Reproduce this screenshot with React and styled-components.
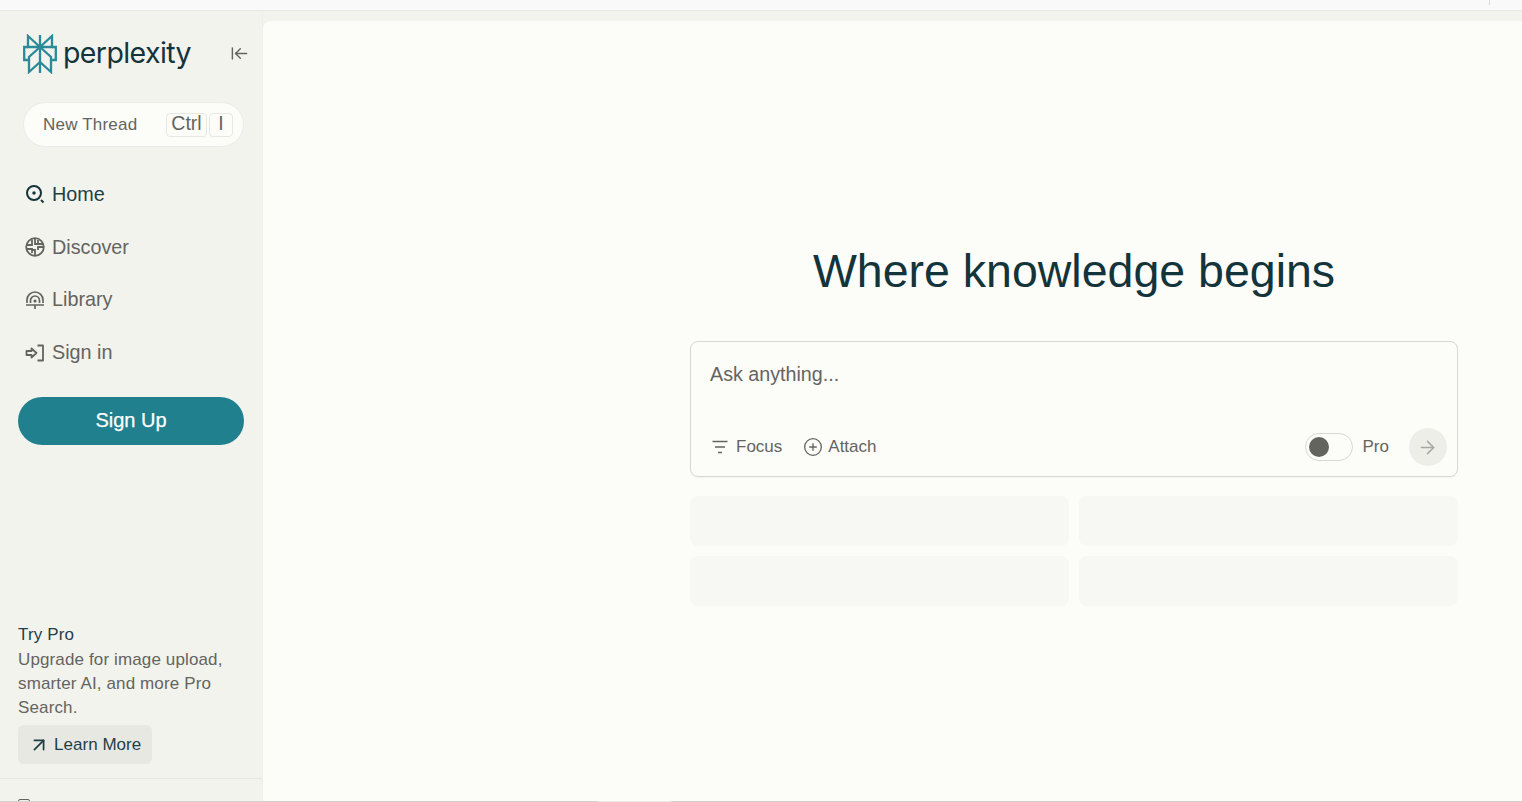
import React from "react";
import styled, { createGlobalStyle } from "styled-components";
import { ArrowLeftToLine, ArrowRight, ArrowUpRight, CirclePlus } from "lucide-react";

const GlobalStyle = createGlobalStyle`
  html, body {
    margin: 0;
    height: 100%;
    overflow: hidden;
    background: #f3f3ee;
    font-family: "Liberation Sans", Arial, sans-serif;
  }
  * { box-sizing: border-box; }
`;

const navItems = [
  { label: "Home", icon: <HomeIcon />, active: true },
  { label: "Discover", icon: <DiscoverIcon /> },
  { label: "Library", icon: <LibraryIcon /> },
  { label: "Sign in", icon: <SignInIcon /> },
];

function LogoMark() {
  return (
    <svg width="34" height="40" viewBox="0 0 34 40" fill="none" stroke="#2b8a98" strokeWidth="2.3">
      <path d="M17 1v38" />
      <path d="M5 2l12 11L29 2v11H5z" />
      <path d="M5 13H1.2v13H6M29 13h3.8v13H28" />
      <path d="M17 13L6 23v15l11-10 11 10V23z" />
    </svg>
  );
}

function HomeIcon() {
  return (
    <svg width="20" height="20" viewBox="0 0 20 20" fill="none" stroke="#13343b" strokeWidth="2">
      <circle cx="9" cy="9" r="7" />
      <circle cx="9" cy="9" r="1.7" fill="#13343b" stroke="none" />
      <path d="M16 16l2.5 2.5" />
    </svg>
  );
}

function DiscoverIcon() {
  return (
    <svg width="20" height="20" viewBox="0 0 20 20" fill="none" stroke="#64645f" strokeWidth="1.8">
      <circle cx="10" cy="10" r="8.8" />
      <path d="M2 8h5V2.5M10 1.5V7h3M18 10h-5v3M10 18.5V13H7M2 12h5v4M13 3v4h5" />
    </svg>
  );
}

function LibraryIcon() {
  return (
    <svg width="20" height="20" viewBox="0 0 20 20" fill="none" stroke="#64645f" strokeWidth="1.7">
      <path d="M1 15h18M10 15v4" />
      <path d="M2 13v-3a8 8 0 0 1 16 0v3" />
      <path d="M5.5 13v-2.5a4.5 4.5 0 0 1 9 0V13" />
      <circle cx="10" cy="11" r="1.6" fill="#64645f" stroke="none" />
    </svg>
  );
}

function SignInIcon() {
  return (
    <svg width="20" height="20" viewBox="0 0 20 20" fill="none" stroke="#64645f" strokeWidth="1.8" strokeLinejoin="round">
      <path d="M1.5 8h5V5.5l5 4.5-5 4.5V12h-5z" />
      <path d="M12.5 2.5h5.5v15h-5.5" />
    </svg>
  );
}

function FilterIcon() {
  return (
    <svg width="16" height="14" viewBox="0 0 16 14" fill="none" stroke="#64645f" strokeWidth="1.7">
      <path d="M0.5 1.5h15M3 7h10M6 12.5h4" />
    </svg>
  );
}

const Page = styled.div`
  height: 100vh;
  display: flex;
  flex-direction: column;
  overflow: hidden;
`;

const BrowserStrip = styled.div`
  height: 11px;
  flex-shrink: 0;
  display: flex;
  justify-content: flex-end;
  padding-right: 32px;
  background: #f9f9f9;
  border-bottom: 1px solid #e6e6e3;
`;

const StripTick = styled.span`
  width: 1px;
  height: 5px;
  background: #d9d9d9;
`;

const Body = styled.div`
  flex: 1;
  min-height: 0;
  display: flex;
`;

const Sidebar = styled.aside`
  width: 263px;
  flex-shrink: 0;
  display: flex;
  flex-direction: column;
  background: #f3f3ee;
  border-right: 1px solid #eeeeea;
`;

const LogoRow = styled.div`
  height: 62px;
  margin-top: 12px;
  margin-bottom: 17px;
  display: flex;
  align-items: center;
  padding: 0 13px 0 23px;
`;

const LogoText = styled.span`
  margin-left: 6px;
  margin-top: -3px;
  font-family: "Inter", "Liberation Sans", sans-serif;
  font-size: 28.5px;
  letter-spacing: -0.6px;
  color: #13343b;
  flex: 1;
`;

const CollapseButton = styled.span`
  display: flex;
  color: #64645f;
  margin-top: -2px;
`;

const NewThread = styled.div`
  height: 45px;
  margin: 0 18px 0 23px;
  display: flex;
  align-items: center;
  gap: 2px;
  padding: 0 10px 0 19px;
  background: #fcfcf9;
  border: 1px solid #ecece7;
  border-radius: 23px;
  font-size: 17px;
  letter-spacing: 0.2px;
  color: #64645f;
`;

const ThreadLabel = styled.span`
  flex: 1;
`;

const Key = styled.kbd`
  height: 24px;
  width: ${(p) => p.$width}px;
  display: flex;
  align-items: center;
  justify-content: center;
  font-family: inherit;
  font-size: 19.5px;
  letter-spacing: 0;
  line-height: 20px;
  padding-bottom: 4px;
  border: 1px solid #e8e8e3;
  border-radius: 4px;
  background: #fcfcf9;
  color: #64645f;
`;

const Nav = styled.nav`
  margin-top: 21px;
  padding-left: 25px;
`;

const NavItem = styled.a`
  height: 52.8px;
  display: flex;
  align-items: center;
  gap: 7px;
  font-size: 19.8px;
  color: ${(p) => (p.$active ? "#1f3f46" : "#64645f")};
`;

const SignUp = styled.button`
  height: 48px;
  margin: 17.6px 18px 0 18px;
  flex-shrink: 0;
  border: 0;
  border-radius: 24px;
  background: #20808d;
  color: #fff;
  font-family: inherit;
  font-size: 20px;
  -webkit-text-stroke: 0.25px #fff;
`;

const Promo = styled.div`
  margin-top: auto;
  padding: 0 18px;
  font-size: 17px;
  line-height: 24px;
  letter-spacing: 0.13px;
  color: #64645f;
`;

const PromoTitle = styled.div`
  color: #1f3f46;
  margin-bottom: 1px;
`;

const LearnMore = styled.a`
  width: 134px;
  height: 39px;
  margin-top: 5px;
  display: flex;
  align-items: center;
  gap: 4px;
  padding-left: 10px;
  border-radius: 6px;
  background: #e8e8e3;
  color: #1f3f46;
  letter-spacing: 0.03px;
`;

const SidebarFooter = styled.div`
  height: 23px;
  flex-shrink: 0;
  margin-top: 14px;
  overflow: hidden;
  padding: 20px 18px 0;
  border-top: 1px solid #e8e8e3;
`;

const FooterIcon = styled.span`
  display: block;
  width: 12px;
  height: 12px;
  border: 1px solid #64645f;
  border-radius: 2px;
`;

const Main = styled.main`
  flex: 1;
  margin-top: 10px;
  display: flex;
  justify-content: flex-end;
  padding: 0 64px 0 0;
  background: #fcfcf9;
  border-top-left-radius: 8px;
`;

const Content = styled.div`
  width: 768px;
  padding-top: 218px;
`;

const Heading = styled.h1`
  margin: 0 0 38px;
  text-align: center;
  font-size: 46.5px;
  line-height: 64px;
  font-weight: 400;
  color: #13343b;
`;

const AskCard = styled.div`
  height: 136px;
  display: flex;
  flex-direction: column;
  justify-content: space-between;
  padding: 21px 10px 10px 19px;
  background: #fcfcf9;
  border: 1px solid #d8d8d3;
  border-radius: 8px;
  box-shadow: 0 1px 2px rgba(0, 0, 0, 0.04);
`;

const AskText = styled.div`
  font-size: 19.7px;
  line-height: 23px;
  color: #64645f;
`;

const AskBar = styled.div`
  display: flex;
  align-items: center;
  font-size: 17px;
  color: #64645f;
`;

const ToolButton = styled.span`
  display: flex;
  align-items: center;
  gap: ${(p) => p.$gap}px;
  margin: ${(p) => p.$margin};
`;

const ProToggle = styled.span`
  width: 48px;
  height: 28px;
  margin-left: auto;
  padding: 3px 0 0 3px;
  border: 1px solid #d8d8d3;
  border-radius: 14px;
`;

const ToggleKnob = styled.span`
  display: block;
  width: 20px;
  height: 20px;
  border-radius: 50%;
  background: #64645f;
`;

const ProLabel = styled.span`
  margin: 0 20px 0 10px;
`;

const SendButton = styled.span`
  width: 38px;
  height: 38px;
  display: flex;
  align-items: center;
  justify-content: center;
  padding-right: 2px;
  border-radius: 50%;
  background: #eeeee9;
  color: #a8a8a3;
`;

const Suggestions = styled.div`
  margin-top: 19px;
  display: grid;
  grid-template-columns: 1fr 1fr;
  gap: 10px;
`;

const SuggestionCard = styled.div`
  height: 50px;
  border-radius: 8px;
  background: #f7f7f3;
`;

const BottomEdge = styled.div`
  height: 1px;
  flex-shrink: 0;
  display: flex;
  justify-content: center;
  padding-right: 253px;
  background: #d4d0cd;
`;

const EdgeGap = styled.span`
  width: 73px;
  background: #ece8e6;
`;

export default function App() {
  return (
    <Page>
      <GlobalStyle />
      <BrowserStrip>
        <StripTick />
      </BrowserStrip>
      <Body>
        <Sidebar>
          <LogoRow>
            <LogoMark />
            <LogoText>perplexity</LogoText>
            <CollapseButton>
              <ArrowLeftToLine size={19} strokeWidth={1.8} />
            </CollapseButton>
          </LogoRow>
          <NewThread>
            <ThreadLabel>New Thread</ThreadLabel>
            <Key $width={41}>Ctrl</Key>
            <Key $width={24}>I</Key>
          </NewThread>
          <Nav>
            {navItems.map((item) => (
              <NavItem key={item.label} $active={item.active}>
                {item.icon}
                {item.label}
              </NavItem>
            ))}
          </Nav>
          <SignUp>Sign Up</SignUp>
          <Promo>
            <PromoTitle>Try Pro</PromoTitle>
            Upgrade for image upload,
            <br />
            smarter AI, and more Pro
            <br />
            Search.
            <LearnMore>
              <ArrowUpRight size={22} strokeWidth={1.9} />
              Learn More
            </LearnMore>
          </Promo>
          <SidebarFooter>
            <FooterIcon />
          </SidebarFooter>
        </Sidebar>
        <Main>
          <Content>
            <Heading>Where knowledge begins</Heading>
            <AskCard>
              <AskText>Ask anything...</AskText>
              <AskBar>
                <ToolButton $gap={8} $margin="0 0 0 2px">
                  <FilterIcon />
                  Focus
                </ToolButton>
                <ToolButton $gap={5} $margin="0 0 0 21px">
                  <CirclePlus size={20} strokeWidth={1.6} />
                  Attach
                </ToolButton>
                <ProToggle>
                  <ToggleKnob />
                </ProToggle>
                <ProLabel>Pro</ProLabel>
                <SendButton>
                  <ArrowRight size={21} strokeWidth={1.7} />
                </SendButton>
              </AskBar>
            </AskCard>
            <Suggestions>
              <SuggestionCard />
              <SuggestionCard />
              <SuggestionCard />
              <SuggestionCard />
            </Suggestions>
          </Content>
        </Main>
      </Body>
      <BottomEdge>
        <EdgeGap />
      </BottomEdge>
    </Page>
  );
}
